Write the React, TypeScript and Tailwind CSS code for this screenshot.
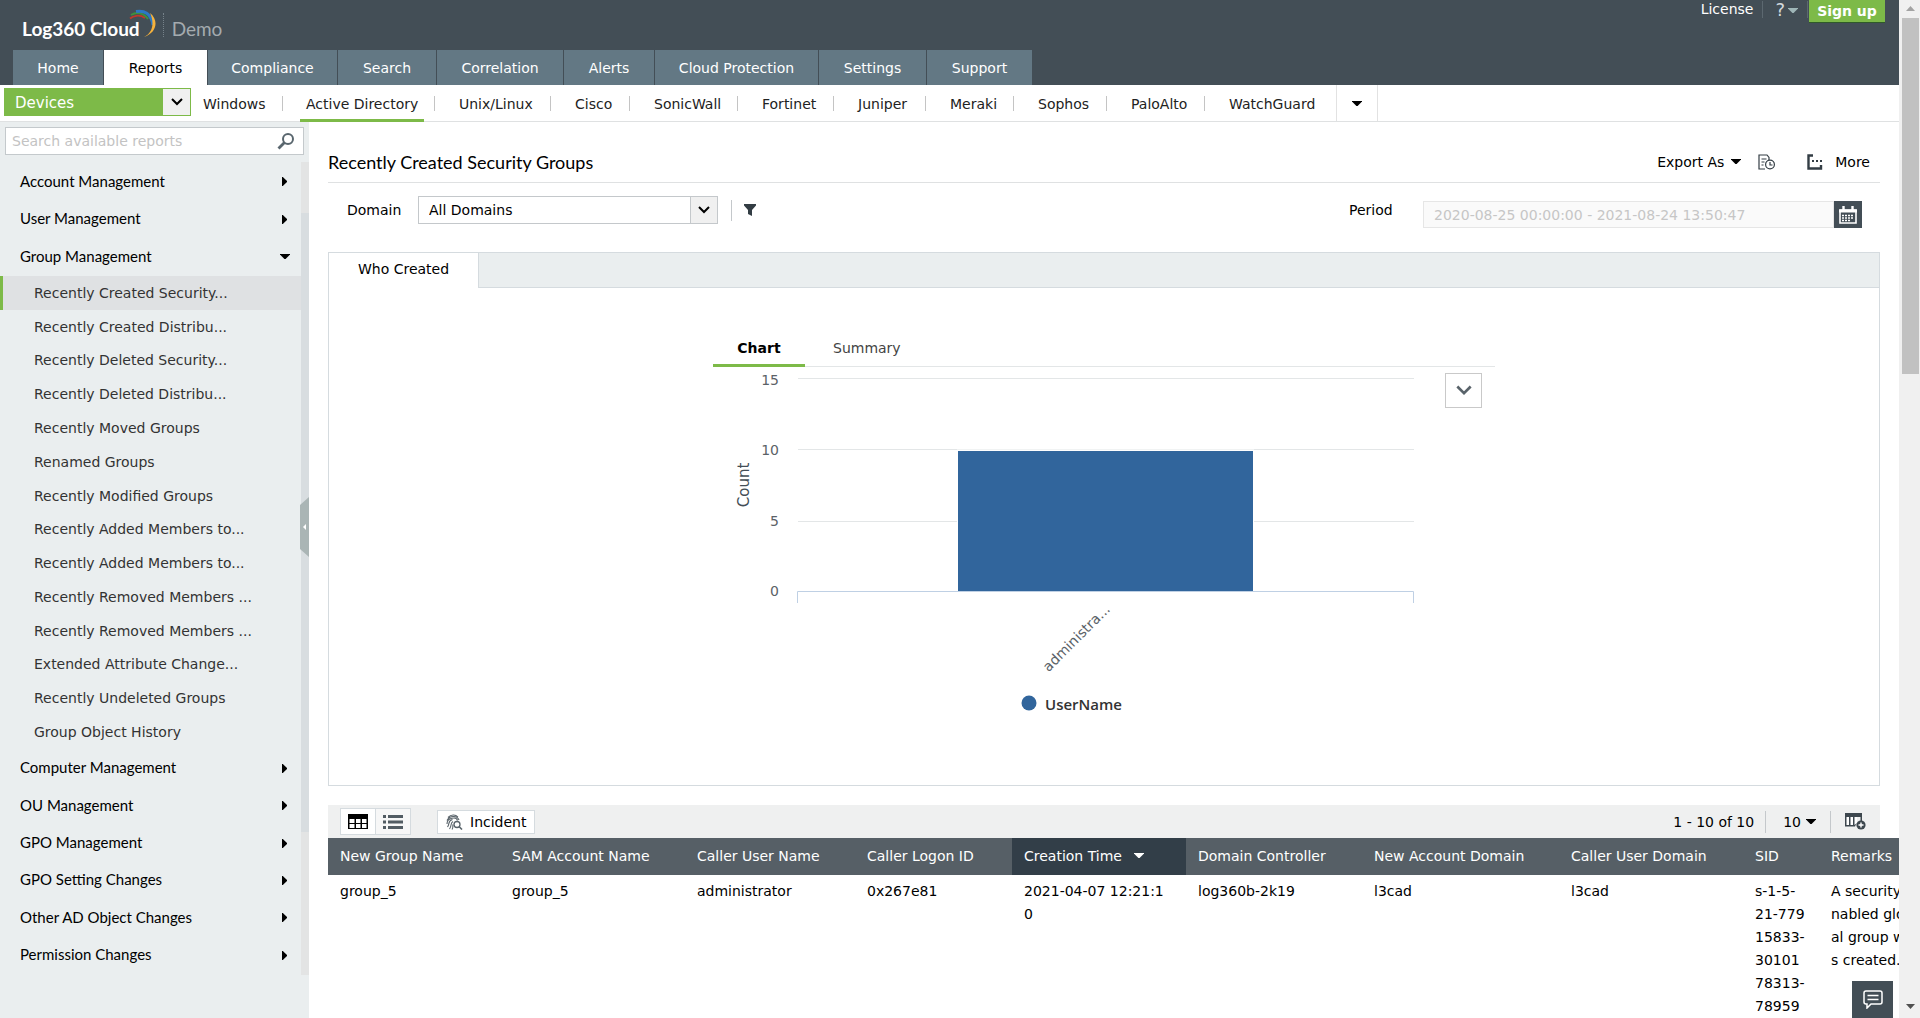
const mainTabs = [
    { label: 'Home', width: 'w-[90px]' },
    { label: 'Reports', width: 'w-[103px]' },
    { label: 'Compliance', width: 'w-[129px]' },
    { label: 'Search', width: 'w-[98px]' },
    { label: 'Correlation', width: 'w-[126px]' },
    { label: 'Alerts', width: 'w-[90px]' },
    { label: 'Cloud Protection', width: 'w-[163px]' },
    { label: 'Settings', width: 'w-[107px]' },
    { label: 'Support', width: 'w-[105px]' },
];

const devices = [
    { label: 'Windows', width: 'w-[92px]' },
    { label: 'Active Directory', width: 'w-[152px]' },
    { label: 'Unix/Linux', width: 'w-[116px]' },
    { label: 'Cisco', width: 'w-[79px]' },
    { label: 'SonicWall', width: 'w-[108px]' },
    { label: 'Fortinet', width: 'w-[96px]' },
    { label: 'Juniper', width: 'w-[92px]' },
    { label: 'Meraki', width: 'w-[88px]' },
    { label: 'Sophos', width: 'w-[93px]' },
    { label: 'PaloAlto', width: 'w-[98px]' },
    { label: 'WatchGuard', width: 'w-[131px]' },
];

const groupReports = [
    'Recently Created Security...',
    'Recently Created Distribu...',
    'Recently Deleted Security...',
    'Recently Deleted Distribu...',
    'Recently Moved Groups',
    'Renamed Groups',
    'Recently Modified Groups',
    'Recently Added Members to...',
    'Recently Added Members to...',
    'Recently Removed Members ...',
    'Recently Removed Members ...',
    'Extended Attribute Change...',
    'Recently Undeleted Groups',
    'Group Object History',
];

const columns = [
    { label: 'New Group Name', width: 'w-[172px]', value: 'group_5' },
    { label: 'SAM Account Name', width: 'w-[185px]', value: 'group_5' },
    { label: 'Caller User Name', width: 'w-[170px]', value: 'administrator' },
    { label: 'Caller Logon ID', width: 'w-[157px]', value: '0x267e81' },
    { label: 'Creation Time', width: 'w-[174px]', value: '2021-04-07 12:21:1\n0' },
    { label: 'Domain Controller', width: 'w-[176px]', value: 'log360b-2k19' },
    { label: 'New Account Domain', width: 'w-[197px]', value: 'l3cad' },
    { label: 'Caller User Domain', width: 'w-[184px]', value: 'l3cad' },
    { label: 'SID', width: 'w-[76px]', value: 's-1-5-\n21-779\n15833-\n30101\n78313-\n78959' },
    { label: 'Remarks', width: 'w-[130px]', value: 'A security-e\nnabled glob\nal group wa\ns created.' },
];

function CaretDown({ className = '' }: { className?: string }) {
    return <svg className={'h-[5px] w-[10px] shrink-0 ' + className} viewBox="0 0 10 5" fill="currentColor" aria-hidden="true">
        <path d="M0 0h10v.6L5.600 5H4.400L0 .6z" />
    </svg>
}

function CaretRight() {
    return <svg className="h-[9px] w-[5px]" viewBox="0 0 5 9" fill="currentColor" aria-hidden="true">
        <path d="M0 0h.8L5 4v1L.8 9H0z" />
    </svg>
}

function Chevron({ className }: { className: string }) {
    return <svg className={className} viewBox="0 0 12 8" fill="none" stroke="currentColor" strokeWidth="2" aria-hidden="true">
        <path d="M1 1l5 5 5-5" />
    </svg>
}

function Logo() {
    return <div className="flex h-[50px] items-center pl-[22px] pt-[9px] font-['Lato',sans-serif]">
        <span className="text-[19px] font-bold text-white">Log360 Cloud</span>
        <svg className="-ml-[12px] -mt-[12px] h-[30px] w-[29px]" viewBox="0 0 29 30" fill="none" aria-hidden="true">
            <path d="M2 9.500C5 7 11 5 17 9" stroke="#c0392b" strokeWidth="1.800" />
            <path d="M3 6C8 3 15 3 20 10" stroke="#3d9140" strokeWidth="2" />
            <path d="M8 2.500C16 1 23 4 25 16" stroke="#2c78c4" strokeWidth="3" />
            <path d="M22 4C31 11 29 24 16 28C26 23 26 12 22 4z" fill="#f6b23c" />
        </svg>
        <span className="-mt-[10px] ml-[6px] h-6 border-l border-dotted border-[#76828a]"></span>
        <span className="ml-2 text-[19px] text-[#a4abaf]">Demo</span>
    </div>
}

function Header() {
    return <header className="bg-[#434e56]">
        <div className="flex justify-between">
            <Logo />
            <div className="flex h-[23px] items-start pr-[14px] text-sm text-white">
                <a href="#license" className="leading-[18px]">License</a>
                <span className="ml-[9px] mt-px h-[17px] border-l border-[#5c6870]"></span>
                <button type="button" className="ml-3 flex h-5 items-center gap-[3px]" aria-label="Help">
                    <span className="text-lg leading-5 text-[#d3d8dc]">?</span>
                    <CaretDown className="text-[#9fb6b8]" />
                </button>
                <span className="ml-[9px] mt-px h-[17px] border-l border-[#5c6870]"></span>
                <a href="#signup" className="ml-px h-[23px] w-[76px] border-b border-[#2f5a2a] bg-[#7dba48] text-center font-bold leading-[22px]">Sign up</a>
            </div>
        </div>
        <nav className="flex h-[35px] gap-px pl-[13px] text-sm">
            {mainTabs.map((tab) => (
                <a key={tab.label} href="#tab" className={tab.width + ' h-[35px] text-center leading-[37px] ' + (tab.label === 'Reports' ? 'bg-white text-black' : 'bg-[#637884] text-white')}>{tab.label}</a>
            ))}
        </nav>
    </header>
}

function DeviceBar() {
    return <div className="flex h-[37px] border-b border-[#dfe1e2] text-sm text-[#222]">
        <div className="relative ml-1 mt-[3px] h-7 w-[187px] shrink-0">
            <select aria-label="Report category" className="h-full w-full appearance-none border border-[#7dba48] bg-[#7dba48] pl-[10px] pt-[3px] text-[15px] text-white">
                <option>Devices</option>
            </select>
            <span className="pointer-events-none absolute right-px top-px flex h-[26px] w-[27px] items-center justify-center bg-[#f0f0f0] text-black">
                <Chevron className="h-2 w-3" />
            </span>
        </div>
        <nav className="flex">
            {devices.map((device) => (
                <div key={device.label} className={device.width + ' flex h-[37px] items-center justify-between'}>
                    <a href="#device" className={'h-[37px] whitespace-nowrap leading-[38px] ' + (device.label === 'Windows' ? 'ml-3' : device.label === 'Active Directory' ? 'ml-[17px] border-b-3 border-[#7dba48] px-[6px]' : 'ml-6')}>{device.label}</a>
                    {device.label !== 'WatchGuard' && <span className="h-[15px] border-l border-[#c4c4c4]"></span>}
                </div>
            ))}
        </nav>
        <button type="button" aria-label="More devices" className="flex w-[42px] items-center justify-center border-x border-[#e2e2e2] text-black"><CaretDown /></button>
    </div>
}

function MenuHeading({ label, open }: { label: string, open?: boolean }) {
    return <button type="button" className="flex w-full flex-1 items-center justify-between pl-5 pr-[11px] text-left font-['Lato',sans-serif] text-[15px] text-black">
        {label}
        {open ? <CaretDown /> : <span className="pr-[3px] pt-[2px]"><CaretRight /></span>}
    </button>
}

function Sidebar() {
    return <aside className="relative w-[309px] shrink-0 bg-[#eaeeef]">
        <div className="mx-[5px] mt-[5px] flex h-7 items-center border border-[#c4c9cc] bg-white">
            <input type="text" aria-label="Search available reports" placeholder="Search available reports" className="h-full min-w-0 flex-1 px-[6px] text-sm outline-none placeholder:text-[#c3c3c3]" />
            <button type="button" aria-label="Search" className="mr-2">
                <svg className="h-[18px] w-[18px]" viewBox="0 0 18 18" fill="none" stroke="#59666e" aria-hidden="true">
                    <circle cx="11" cy="7" r="5" strokeWidth="2" />
                    <path d="M7.500 10.500L1.500 16.500" strokeWidth="2.800" />
                </svg>
            </button>
        </div>
        <div className="mt-[7px] flex">
            <div className="min-w-0 flex-1">
                <div className="flex h-[114px] flex-col pb-px">
                    <MenuHeading label="Account Management" />
                    <MenuHeading label="User Management" />
                    <MenuHeading label="Group Management" open />
                </div>
                <ul className="flex h-[473px] flex-col text-sm text-[#333]">
                    {groupReports.map((report, i) => (
                        <li key={i} className={'flex flex-1 items-center border-l-3 ' + (i === 0 ? 'border-[#7dba48] bg-[#dfe1e3]' : 'border-transparent')}>
                            <a href="#report" className="pl-[31px]">{report}</a>
                        </li>
                    ))}
                </ul>
                <div className="flex h-[224px] flex-col">
                    <MenuHeading label="Computer Management" />
                    <MenuHeading label="OU Management" />
                    <MenuHeading label="GPO Management" />
                    <MenuHeading label="GPO Setting Changes" />
                    <MenuHeading label="Other AD Object Changes" />
                    <MenuHeading label="Permission Changes" />
                </div>
            </div>
            <div className="h-[813px] w-2 bg-[#e3e4e4] pt-[51px]">
                <div className="h-[619px] bg-[#d8dde0]"></div>
            </div>
        </div>
        <button type="button" aria-label="Collapse sidebar" className="absolute right-0 top-[375px]">
            <svg className="h-[60px] w-[9px]" viewBox="0 0 9 60" aria-hidden="true">
                <path d="M9 0v60L0 52V8z" fill="#aab5b5" />
                <path d="M6 27v6l-3-3z" fill="#fff" />
            </svg>
        </button>
    </aside>
}

function TitleRow() {
    return <div className="flex h-[61px] items-center justify-between border-b border-[#dfe1e2] pt-[19px] text-sm text-black">
        <h1 className="font-['Lato',sans-serif] text-lg">Recently Created Security Groups</h1>
        <div className="flex items-center pr-[10px]">
            <button type="button" className="flex items-center gap-[7px]">Export As <CaretDown /></button>
            <button type="button" aria-label="Schedule report" className="ml-[17px]">
                <svg className="h-4 w-[18px]" viewBox="0 0 18 16" fill="none" stroke="#333d44" strokeWidth="1.200" aria-hidden="true">
                    <path d="M7 15H1V1h8l2 2.500V6M3.500 5h5M3.500 8h3M3.500 11h2" />
                    <circle cx="12" cy="10.500" r="4.400" fill="#fff" />
                    <path d="M12 8v3h2.500" />
                </svg>
            </button>
            <button type="button" className="ml-[31px] flex items-center gap-3">
                <svg className="h-4 w-4" viewBox="0 0 16 16" fill="none" stroke="#333d44" aria-hidden="true">
                    <path d="M6 1.500H1.500v13H14V11" strokeWidth="2.400" />
                    <path d="M5 7h2M9 7h2M13 7h2" strokeWidth="2" />
                </svg>
                More
            </button>
        </div>
    </div>
}

function FilterRow() {
    return <div className="flex h-[69px] items-start justify-between pl-[19px] pr-[18px] text-sm text-black">
        <div className="flex items-center pt-[13px]">
            <label htmlFor="domain" className="w-[71px]">Domain</label>
            <div className="relative h-7 w-[300px]">
                <select id="domain" className="h-full w-full appearance-none border border-[#c4c8cb] bg-white pl-[10px]">
                    <option>All Domains</option>
                </select>
                <span className="pointer-events-none absolute right-px top-px flex h-[26px] w-[27px] items-center justify-center border-l border-[#c4c8cb] bg-[#f0f0f0]">
                    <Chevron className="h-2 w-3" />
                </span>
            </div>
            <span className="ml-[13px] h-[21px] border-l border-[#c4c8cb]"></span>
            <button type="button" aria-label="Filter" className="ml-3">
                <svg className="h-3 w-3" viewBox="0 0 12 12" fill="#333d44" aria-hidden="true"><path d="M0 0h12v1.500L8 6v6l-4-2V6L0 1.500z" /></svg>
            </button>
        </div>
        <div className="flex items-start pt-[18px]">
            <label htmlFor="period" className="w-[74px] leading-[18px]">Period</label>
            <input id="period" type="text" readOnly defaultValue="2020-08-25 00:00:00 - 2021-08-24 13:50:47" className="h-[27px] w-[411px] border border-[#e6e6e6] bg-[#fafafa] px-[10px] text-[#c6c6c6]" />
            <button type="button" aria-label="Pick period" className="flex h-[27px] w-7 items-center justify-center bg-[#434e56]">
                <svg className="h-[18px] w-[18px]" viewBox="0 0 18 18" fill="none" stroke="#fff" aria-hidden="true">
                    <path d="M1 4v13h16V4z" strokeWidth="1.600" />
                    <path d="M0 5h18" strokeWidth="3" />
                    <path d="M4.500 0v4M13.500 0v4" strokeWidth="2.400" />
                    <path d="M3 9.500h12M3 12h12M3 14.500h9" strokeDasharray="2 1" strokeWidth="1.500" />
                </svg>
            </button>
        </div>
    </div>
}

function BarChart() {
    return <svg className="h-[360px] w-[702px]" viewBox="0 0 702 360" role="img" aria-label="Count by user name">
        <g stroke="#e3e6e7">
            <path d="M85 11.500h616M85 82.500h616M85 154.500h616" />
        </g>
        <rect x="244" y="82.500" width="297" height="143" fill="#fff" />
        <rect x="245" y="84" width="295" height="140" fill="#31659c" />
        <path d="M84.500 236v-11.500h616V236" fill="none" stroke="#bfd0e4" />
        <g fontSize="14" fill="#5b6267" textAnchor="end">
            <text x="66" y="18">15</text>
            <text x="66" y="88">10</text>
            <text x="66" y="159">5</text>
            <text x="66" y="229">0</text>
        </g>
        <text fontSize="15" fill="#434e56" textAnchor="middle" transform="translate(36 118) rotate(-90)">Count</text>
        <text fontSize="14" fill="#5b6267" textAnchor="end" transform="translate(398 243) rotate(-45)">administra...</text>
        <circle cx="316" cy="336" r="7.500" fill="#31659c" />
        <text x="332" y="343" fontSize="15" fill="#333" className="font-['Open_Sans',sans-serif] font-semibold">UserName</text>
    </svg>
}

function ChartPanel() {
    return <section className="h-[534px] border border-[#d5dbdf] text-sm">
        <div className="flex h-[35px] border-b border-[#d5dbdf] bg-[#eaeeef]">
            <button type="button" className="-mb-px w-[150px] border-r border-[#d5dbdf] bg-white pb-1 text-black">Who Created</button>
        </div>
        <div className="mx-auto mt-[43px] w-[782px]">
            <div className="flex h-9 border-b border-[#e3e6e7]">
                <button type="button" className="-mb-px w-[92px] border-b-3 border-[#7dba48] font-bold text-black">Chart</button>
                <button type="button" className="ml-7 pb-[2px] text-[#444]">Summary</button>
            </div>
            <div className="flex justify-between pr-[13px]">
                <BarChart />
                <button type="button" aria-label="Chart options" className="mt-[6px] flex h-[35px] w-[37px] items-center justify-center border border-[#c9c9c9] text-[#59636a]">
                    <Chevron className="h-[11px] w-4" />
                </button>
            </div>
        </div>
    </section>
}

function ToolDivider({ className }: { className: string }) {
    return <span className={'h-[22px] border-l border-[#c4c8cb] ' + className}></span>
}

function TableToolbar() {
    return <div className="mr-[19px] mt-[19px] flex h-[33px] items-center justify-between bg-[#eff0f0] pl-3 pr-[14px] text-sm text-black">
        <div className="flex items-center">
            <div className="flex h-[27px] border border-[#d5dbdf]">
                <button type="button" aria-label="Table view" className="flex w-[35px] items-center justify-center border-r border-[#d5dbdf] bg-white">
                    <svg className="h-[15px] w-5" viewBox="0 0 20 15" aria-hidden="true">
                        <path d="M0 0h20v15H0z" />
                        <path d="M1.500 5h5v4h-5zM8 5h4.500v4H8zM14 5h4.500v4H14zM1.500 10h5v4h-5zM8 10h4.500v4H8zM14 10h4.500v4H14z" fill="#fff" />
                    </svg>
                </button>
                <button type="button" aria-label="List view" className="flex w-[34px] items-center justify-center bg-[#f7f7f7]">
                    <svg className="h-[14px] w-5" viewBox="0 0 20 14" fill="#525c63" aria-hidden="true">
                        <path d="M0 0h3v3H0zM5 0h15v3H5zM0 5.500h3v3H0zM5 5.500h15v3H5zM0 11h3v3H0zM5 11h15v3H5z" />
                    </svg>
                </button>
            </div>
            <button type="button" className="ml-[26px] flex h-6 items-center gap-[7px] border border-[#d5dbdf] bg-white px-2">
                <svg className="h-4 w-[17px]" viewBox="0 0 17 16" fill="none" stroke="#59636a" strokeWidth="1.100" aria-hidden="true">
                    <path d="M2 3.500C5 .3 9.500.3 12 3M1 6.500C3.500 1.500 11 1 13 6M1 10C1 3.500 10.500 2.500 11.500 6.500M1.500 13C4 10 1.500 6.500 6.500 5.500M3.500 15C6 12 4 9 7 7.500M6 15.500C7.500 13.500 6.500 12 7 10.500" />
                    <circle cx="11" cy="10.500" r="3" strokeWidth="1.300" />
                    <path d="M13 12.500l3 3" strokeWidth="1.600" />
                </svg>
                Incident
            </button>
        </div>
        <div className="flex items-center">
            <span>1 - 10 of 10</span>
            <ToolDivider className="ml-[11px]" />
            <button type="button" className="ml-[17px] flex items-center gap-[5px]">10 <CaretDown /></button>
            <ToolDivider className="ml-[14px]" />
            <button type="button" aria-label="Add columns" className="ml-[14px]">
                <svg className="h-[17px] w-[21px]" viewBox="0 0 21 17" aria-hidden="true">
                    <path d="M0 0h17v9h-1.500V4H12v5l-2 4.500H0z" fill="#3d474e" />
                    <path d="M1.500 4h2.500v8H1.500zM5.500 4H8v8H5.500zM9.500 4H12v6l-2.500 2z" fill="#fff" />
                    <circle cx="16" cy="12" r="4.600" fill="#3d474e" />
                    <path d="M16 9.500v5M13.500 12h5" stroke="#fff" strokeWidth="1.400" />
                </svg>
            </button>
        </div>
    </div>
}

function ResultTable() {
    return <table className="w-[1621px] table-fixed border-collapse text-left text-sm">
        <thead>
            <tr className="h-[37px] bg-[#565f66] text-white">
                {columns.map((column) => (
                    <th key={column.label} className={column.width + ' whitespace-nowrap pb-[2px] pl-3 font-normal ' + (column.label === 'Creation Time' ? 'bg-[#323e48]' : '')}>
                        {column.label === 'Creation Time'
                            ? <button type="button" className="flex items-center gap-3">{column.label} <CaretDown className="w-[9px]" /></button>
                            : column.label}
                    </th>
                ))}
            </tr>
        </thead>
        <tbody>
            <tr>
                {columns.map((column) => (
                    <td key={column.label} className="whitespace-pre pl-3 pt-[5px] align-top leading-[23px] text-black">{column.value}</td>
                ))}
            </tr>
        </tbody>
    </table>
}

function PageScrollbar() {
    return <div className="flex w-[21px] shrink-0 flex-col items-center justify-between bg-[#f0f0f0] py-[6px]" aria-hidden="true">
        <div className="flex w-full flex-col items-center gap-[7px] pl-[2px]">
            <svg className="h-[5px] w-[9px]" viewBox="0 0 9 5" fill="#a3a3a3"><path d="M4.500 0L9 5H0z" /></svg>
            <div className="h-[356px] w-[17px] bg-[#c1c1c1]"></div>
        </div>
        <svg className="mb-[3px] ml-[1px] h-[5px] w-[9px]" viewBox="0 0 9 5" fill="#505050"><path d="M4.500 5L9 0H0z" /></svg>
    </div>
}

export default function App() {
    return <div className="flex h-screen overflow-hidden bg-white font-['Verdana','DejaVu_Sans',sans-serif]">
        <div className="relative flex min-w-0 flex-1 flex-col">
            <Header />
            <DeviceBar />
            <div className="flex min-h-0 flex-1">
                <Sidebar />
                <main className="min-w-0 flex-1 overflow-hidden pl-[19px]">
                    <div className="mr-[19px]">
                        <TitleRow />
                        <FilterRow />
                        <ChartPanel />
                    </div>
                    <TableToolbar />
                    <ResultTable />
                </main>
            </div>
            <button type="button" aria-label="Chat" className="absolute bottom-0 right-[6px] flex h-[37px] w-[41px] items-center justify-center bg-[#434e56]">
                <svg className="h-[19px] w-5" viewBox="0 0 20 19" fill="none" stroke="#fff" strokeWidth="1.500" aria-hidden="true">
                    <path d="M3 1h14q2 0 2 2v9q0 2-2 2H8l-4 4v-4H3q-2 0-2-2V3q0-2 2-2zM4.500 5.500h11M4.500 9.500h11" />
                </svg>
            </button>
        </div>
        <PageScrollbar />
    </div>
}
